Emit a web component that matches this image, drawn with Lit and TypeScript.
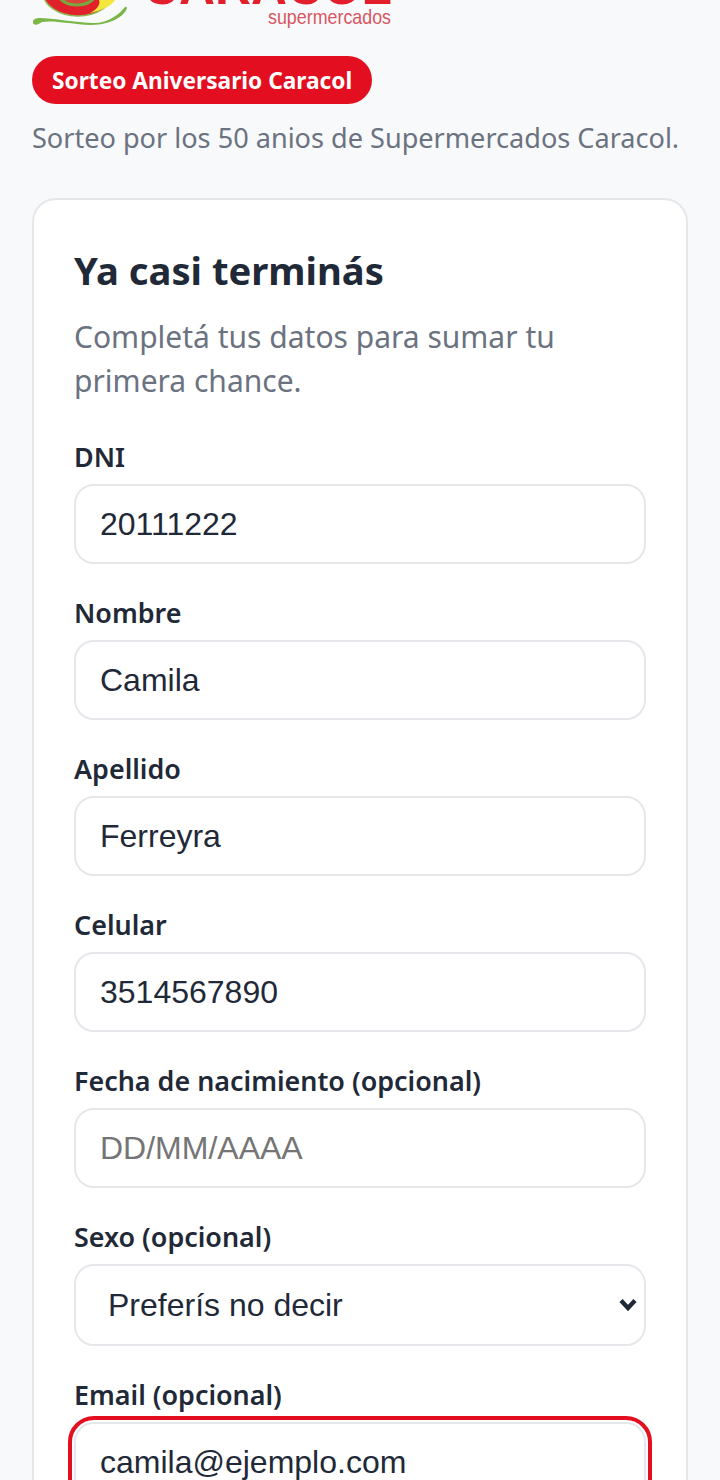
import { LitElement, html, css, svg } from "lit";
import { customElement } from "lit/decorators.js";

@customElement("app-root")
export class AppRoot extends LitElement {
  static styles = css`
    :host { display: block; height: 1480px; overflow: hidden; background: #f8f9fb; font-family: "Noto Sans", "Open Sans", sans-serif; color: #1f2937; }
    .page { padding: 0 32px; }
    .logo { display: block; width: 370px; height: 30px; margin-bottom: 26px; }
    .logo text { font-family: "Liberation Sans", sans-serif; }
    .badge { display: inline-block; height: 48px; box-sizing: border-box; padding: 0 20px; border-radius: 24px; background: #e30f20; color: #fff; font-size: 22.7px; font-weight: 700; line-height: 50px; white-space: nowrap; vertical-align: top; }
    .sub { margin: 14px 0 0; font-size: 27.1px; line-height: 40px; color: #6b7280; white-space: nowrap; }
    .card { margin-top: 40px; width: 656px; box-sizing: border-box; background: #fff; border: 2px solid #e5e7eb; border-radius: 24px; padding: 45px 40px 40px; }
    h1 { margin: 0; font-size: 38.2px; line-height: 50px; font-weight: 700; color: #1f2937; }
    .lead { margin: 20px 0 37px; font-size: 30px; line-height: 44px; color: #6b7280; }
    .field { margin-top: 32px; }
    label { display: block; font-size: 26.9px; line-height: 34px; font-weight: 600; color: #1f2937; margin-bottom: 10px; white-space: nowrap; }
    input, select { display: block; width: 100%; box-sizing: border-box; height: 80px; border: 2px solid #e5e7eb; border-radius: 20px; background: #fff; padding: 0 24px; font-family: "Liberation Sans", Arial, sans-serif; font-size: 32px; color: #1f2937; outline: none; }
    input::placeholder { color: #757575; opacity: 1; }
    .select-wrap { position: relative; margin-bottom: 2px; }
    select { height: 82px; padding-left: 32px; appearance: none; -webkit-appearance: none; }
    .chevron { position: absolute; right: 9px; top: 34px; width: 18px; height: 13px; pointer-events: none; }
    .focus { outline: 4px solid #e30f20; outline-offset: 2px; border-radius: 20px; }
  `;

  render() {
    const fields: [string, string, string][] = [
      ["DNI", "20111222", ""],
      ["Nombre", "Camila", ""],
      ["Apellido", "Ferreyra", ""],
      ["Celular", "3514567890", ""],
      ["Fecha de nacimiento (opcional)", "", "DD/MM/AAAA"],
    ];
    return html`
      <div class="page">
        <svg class="logo" viewBox="0 0 370 30" aria-hidden="true">
          ${svg`
            <ellipse cx="46" cy="-8" rx="35" ry="24" fill="#e2202c" stroke="#8cb64a" stroke-width="1.5" />
            <ellipse cx="45" cy="-9" rx="20" ry="14" fill="#d9453a" stroke="#7aa63e" stroke-width="3" />
            <path d="M58 13 C 68 11 80 6 83 0 L 67 0 C 69 5 64 10 58 13 Z" fill="#f4e63a" />
            <path d="M1 22 C 1 19 4 18 8 18 C 20 18 40 22 60 23 C 75 24 88 14 93 7 C 96 6 95 10 93 12 C 85 22 70 25 58 25 C 40 24 20 20 10 22 C 6 25 1 26 1 22 Z" fill="#7ab648" />
            <text x="111" y="4" font-size="52" font-weight="700" fill="#e2202c" textLength="249" lengthAdjust="spacingAndGlyphs">CARACOL</text>
            <text x="236" y="24" font-size="21" fill="#d75660" textLength="123" lengthAdjust="spacingAndGlyphs">supermercados</text>
          `}
        </svg>
        <div class="badge">Sorteo Aniversario Caracol</div>
        <p class="sub">Sorteo por los 50 anios de Supermercados Caracol.</p>
        <div class="card">
          <h1>Ya casi terminás</h1>
          <p class="lead">Completá tus datos para sumar tu primera chance.</p>
          ${fields.map(([l, v, p]) => html`
            <div class="field">
              <label>${l}</label>
              <input .value=${v} placeholder=${p} />
            </div>`)}
          <div class="field">
            <label>Sexo (opcional)</label>
            <div class="select-wrap">
              <select><option>Preferís no decir</option></select>
              <svg class="chevron" viewBox="0 0 18 13" aria-hidden="true">
                <path d="M2 2.5 L9 10 L16 2.5" fill="none" stroke="#1f2937" stroke-width="4.4" />
              </svg>
            </div>
          </div>
          <div class="field">
            <label>Email (opcional)</label>
            <input class="focus" .value=${"camila@ejemplo.com"} />
          </div>
        </div>
      </div>
    `;
  }
}
